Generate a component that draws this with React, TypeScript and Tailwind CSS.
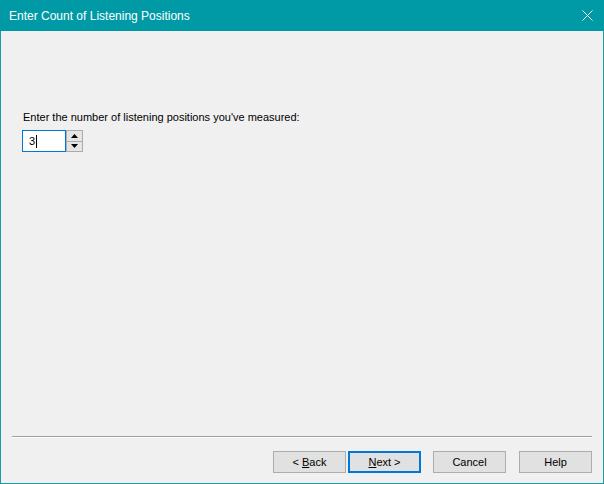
import React, { useState } from 'react';

const font = { fontFamily: '"Segoe UI", "Liberation Sans", Arial, sans-serif' };

function WinButton({ children, primary }: { children: React.ReactNode; primary?: boolean }) {
  return (
    <button
      className={
        'w-[73px] h-[22px] bg-[#e1e1e1] text-[11px] text-black leading-none flex items-center justify-center ' +
        (primary ? 'border-2 border-[#0078d7]' : 'border border-[#adadad]')
      }
    >
      {children}
    </button>
  );
}

export default function App() {
  const [count] = useState('3');

  return (
    <div className="w-[604px] h-[484px] flex flex-col bg-[#f0f0f0] border border-[#1a9ca7] border-t-0" style={font}>
      {/* Title bar */}
      <div className="h-[31px] bg-[#009aa6] flex items-center justify-between pl-[9px] pr-[10px] -mx-px">
        <span className="text-white text-[12px]">Enter Count of Listening Positions</span>
        <svg width="11" height="11" viewBox="0 0 11 11" className="mr-[1px]">
          <path d="M0.5 0.5 L10.5 10.5 M10.5 0.5 L0.5 10.5" stroke="white" strokeWidth="1" />
        </svg>
      </div>

      {/* Content */}
      <div className="flex-1 flex flex-col pl-[21px] pt-[78px]">
        <div className="text-[11px] text-black leading-[16px] pl-px">
          Enter the number of listening positions you've measured:
        </div>
        <div className="flex mt-[5px]">
          <div className="w-[44px] h-[22px] bg-white border border-[#0078d7] flex items-center pl-[6px] text-[11px]">
            {count}
            <span className="w-px h-[13px] bg-black ml-px" />
          </div>
          <div className="w-[17px] h-[22px] flex flex-col border border-[#acacac] bg-[#f0f0f0]">
            <div className="flex-1 bg-[#e5e5e5] border-b border-[#acacac] flex items-center justify-center">
              <svg width="7" height="4" viewBox="0 0 7 4"><path d="M3.5 0 L7 4 L0 4 Z" fill="black" /></svg>
            </div>
            <div className="flex-1 bg-[#e5e5e5] flex items-center justify-center">
              <svg width="7" height="4" viewBox="0 0 7 4"><path d="M0 0 L7 0 L3.5 4 Z" fill="black" /></svg>
            </div>
          </div>
        </div>
      </div>

      {/* Footer */}
      <div className="px-[11px]">
        <div className="h-[2px] border-t border-[#a0a0a0] border-b border-b-white" />
      </div>
      <div className="h-[45px] flex items-start justify-end pr-[11px] pt-[13px]">
        <div className="flex gap-[2px]">
          <WinButton>
            &lt; <span className="underline ml-[3px]">B</span>ack
          </WinButton>
          <WinButton primary>
            <span className="underline">N</span>ext &gt;
          </WinButton>
        </div>
        <div className="ml-[12px]">
          <WinButton>Cancel</WinButton>
        </div>
        <div className="ml-[13px]">
          <WinButton>Help</WinButton>
        </div>
      </div>
    </div>
  );
}
